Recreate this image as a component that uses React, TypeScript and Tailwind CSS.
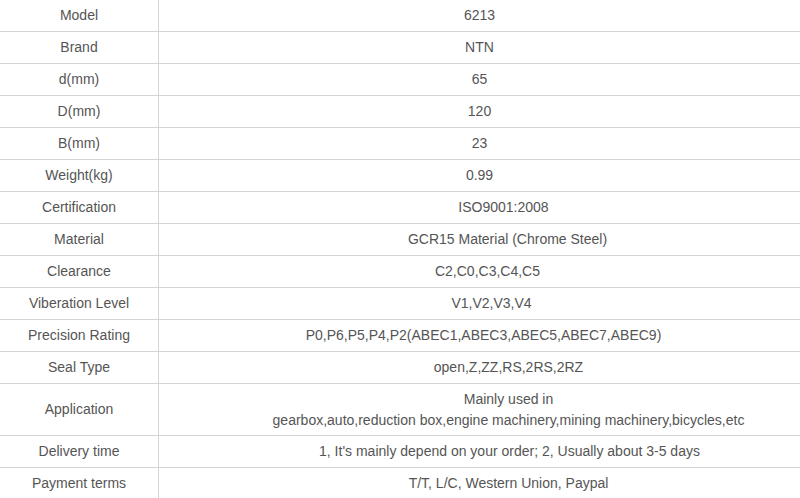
import React from "react";

const rows: [string, string[], string][] = [
  ["Model", ["6213"], "pl-0"],
  ["Brand", ["NTN"], "pl-0"],
  ["d(mm)", ["65"], "pl-0"],
  ["D(mm)", ["120"], "pl-0"],
  ["B(mm)", ["23"], "pl-0"],
  ["Weight(kg)", ["0.99"], "pl-0"],
  ["Certification", ["ISO9001:2008"], "pl-[48px]"],
  ["Material", ["GCR15 Material (Chrome Steel)"], "pl-[56px]"],
  ["Clearance", ["C2,C0,C3,C4,C5"], "pl-[16px]"],
  ["Viberation Level", ["V1,V2,V3,V4"], "pl-[24px]"],
  ["Precision Rating", ["P0,P6,P5,P4,P2(ABEC1,ABEC3,ABEC5,ABEC7,ABEC9)"], "pl-[8px]"],
  ["Seal Type", ["open,Z,ZZ,RS,2RS,2RZ"], "pl-[58px]"],
  ["Application", ["Mainly used in", "gearbox,auto,reduction box,engine machinery,mining machinery,bicycles,etc"], "pl-[58px]"],
  ["Delivery time", ["1, It's mainly depend on your order; 2, Usually about 3-5 days"], "pl-[60px]"],
  ["Payment terms", ["T/T, L/C, Western Union, Paypal"], "pl-[58px]"],
];

export default function App() {
  return (
    <div
      className="w-[800px] h-[498px] overflow-hidden bg-white text-[14px] leading-[21px] text-[#555]"
      style={{ fontFamily: '"Liberation Sans", Arial, sans-serif' }}
    >
      {rows.map(([k, v, pad]) => (
        <div key={k} className="flex border-b border-[#d4d4d4]">
          <div
            className={`w-[159px] shrink-0 border-r border-[#d4d4d4] flex items-center justify-center text-center ${
              v.length > 1 ? "h-[51px]" : "h-[31px]"
            }`}
          >
            {k}
          </div>
          <div className={`flex-1 flex flex-col items-center justify-center text-center ${pad}`}>
            {v.map((t) => (
              <div key={t} className="whitespace-nowrap">{t}</div>
            ))}
          </div>
        </div>
      ))}
    </div>
  );
}
